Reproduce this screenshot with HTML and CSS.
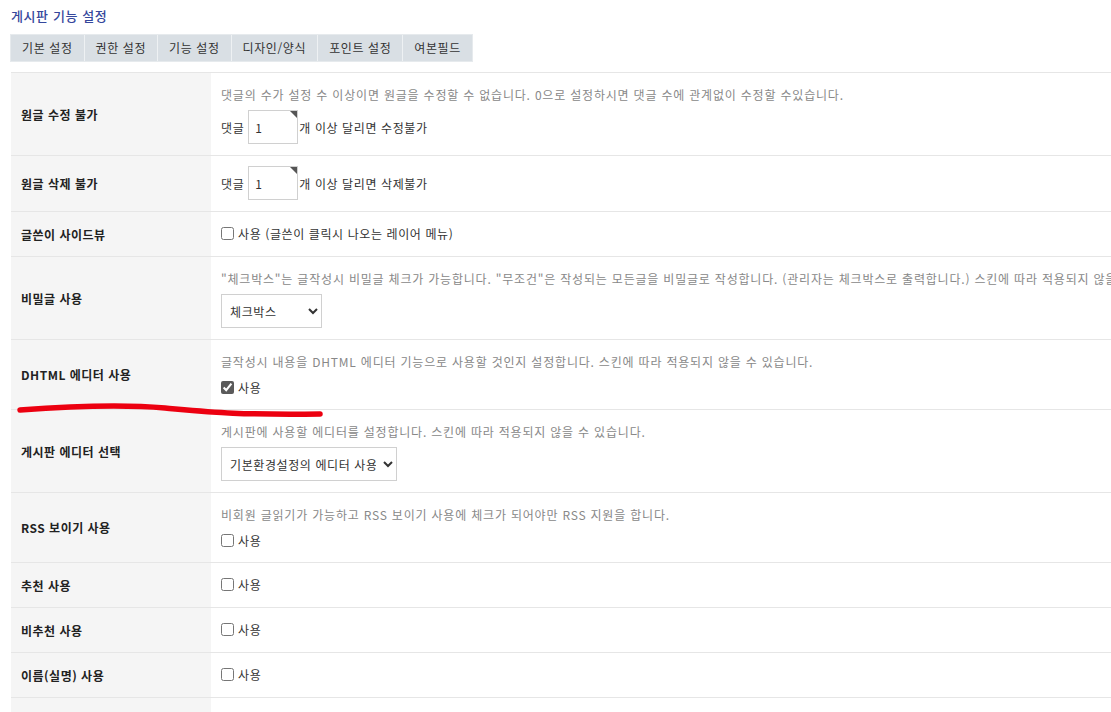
FILE: index.html
```html
<!DOCTYPE html>
<html lang="ko">
<head>
    <meta charset="UTF-8">
    <meta name="viewport" content="width=device-width, initial-scale=1.0">
    <title>게시판 기능 설정</title>
    <link rel="stylesheet" href="styles.css">
</head>
<body>
    <div class="page">
        <h2 class="title">게시판 기능 설정</h2>
        <ul class="tabs">
            <li>기본 설정</li>
            <li>권한 설정</li>
            <li>기능 설정</li>
            <li>디자인/양식</li>
            <li>포인트 설정</li>
            <li>여본필드</li>
        </ul>

        <table class="setting-table">
            <tbody>
                <tr>
                    <th>원글 수정 불가</th>
                    <td>
                        <div class="desc">댓글의 수가 설정 수 이상이면 원글을 수정할 수 없습니다. 0으로 설정하시면 댓글 수에 관계없이 수정할 수있습니다.</div>
                        <div class="field">댓글 <span class="num-wrap"><input type="text" class="num" value="1"></span>개 이상 달리면 수정불가</div>
                    </td>
                </tr>
                <tr>
                    <th>원글 삭제 불가</th>
                    <td>
                        <div class="field">댓글 <span class="num-wrap"><input type="text" class="num" value="1"></span>개 이상 달리면 삭제불가</div>
                    </td>
                </tr>
                <tr>
                    <th>글쓴이 사이드뷰</th>
                    <td>
                        <label class="check"><input type="checkbox"> 사용 (글쓴이 클릭시 나오는 레이어 메뉴)</label>
                    </td>
                </tr>
                <tr>
                    <th>비밀글 사용</th>
                    <td>
                        <div class="desc">"체크박스"는 글작성시 비밀글 체크가 가능합니다. "무조건"은 작성되는 모든글을 비밀글로 작성합니다. (관리자는 체크박스로 출력합니다.) 스킨에 따라 적용되지 않을 수 있습니다.</div>
                        <div class="field">
                            <select class="sel sel-short">
                                <option>체크박스</option>
                                <option>무조건</option>
                                <option>사용하지 않음</option>
                            </select>
                        </div>
                    </td>
                </tr>
                <tr>
                    <th>DHTML 에디터 사용</th>
                    <td>
                        <div class="desc">글작성시 내용을 DHTML 에디터 기능으로 사용할 것인지 설정합니다. 스킨에 따라 적용되지 않을 수 있습니다.</div>
                        <label class="check"><input type="checkbox" checked> 사용</label>
                    </td>
                </tr>
                <tr>
                    <th>게시판 에디터 선택</th>
                    <td>
                        <div class="desc">게시판에 사용할 에디터를 설정합니다. 스킨에 따라 적용되지 않을 수 있습니다.</div>
                        <div class="field">
                            <select class="sel sel-long">
                                <option>기본환경설정의 에디터 사용</option>
                                <option>smarteditor2</option>
                                <option>cheditor5</option>
                            </select>
                        </div>
                    </td>
                </tr>
                <tr>
                    <th>RSS 보이기 사용</th>
                    <td>
                        <div class="desc">비회원 글읽기가 가능하고 RSS 보이기 사용에 체크가 되어야만 RSS 지원을 합니다.</div>
                        <label class="check"><input type="checkbox"> 사용</label>
                    </td>
                </tr>
                <tr>
                    <th>추천 사용</th>
                    <td><label class="check"><input type="checkbox"> 사용</label></td>
                </tr>
                <tr>
                    <th>비추천 사용</th>
                    <td><label class="check"><input type="checkbox"> 사용</label></td>
                </tr>
                <tr>
                    <th>이름(실명) 사용</th>
                    <td><label class="check"><input type="checkbox"> 사용</label></td>
                </tr>
                <tr class="row-empty">
                    <th></th>
                    <td></td>
                </tr>
            </tbody>
        </table>

        <svg class="marker" width="340" height="30" viewBox="0 0 340 30">
            <path d="M20 14 C 60 11, 120 8, 165 12 S 235 19, 320 18" fill="none" stroke="#ec0010" stroke-width="5.5" stroke-linecap="round"/>
        </svg>
    </div>
</body>
</html>
```

FILE: styles.css
```css
body {
    margin: 0;
    font-family: "Noto Sans CJK KR", "Noto Sans", sans-serif;
    font-size: 12px;
    letter-spacing: 0.6px;
    color: #333;
    background-color: #fff;
    overflow: hidden;
}
.page {
    position: relative;
    padding: 6px 0 0 10px;
    width: 1400px;
}
.title {
    margin: 0 0 8px 1px;
    font-size: 13px;
    font-weight: 500;
    line-height: 20px;
    color: #35479c;
}
.tabs {
    display: flex;
    margin: 0;
    padding: 0;
    list-style: none;
    width: fit-content;
    background-color: #d9dfe4;
    border: 1px solid #e6eaed;
}
.tabs li {
    padding: 0 11px;
    line-height: 26px;
    color: #333;
    border-right: 1px solid #eef1f3;
}
.tabs li:last-child {
    border-right: none;
}
.setting-table {
    margin: 10px 0 0 1px;
    width: 1300px;
    border-collapse: collapse;
    border-top: 1px solid #e6e6e6;
}
.setting-table tr {
    border-bottom: 1px solid #e6e6e6;
}
.setting-table th {
    width: 180px;
    padding: 0 10px;
    text-align: left;
    font-weight: bold;
    letter-spacing: 0.5px;
    color: #222;
    background-color: #f5f5f5;
    vertical-align: middle;
}
.setting-table td {
    padding: 10px 10px 11px;
    vertical-align: top;
}
.row-empty th,
.row-empty td {
    height: 23px;
}
.desc {
    line-height: 24px;
    margin-bottom: 3px;
    letter-spacing: 0.8px;
    color: #888;
    white-space: nowrap;
}
.field {
    display: flex;
    align-items: center;
    height: 34px;
    white-space: nowrap;
}
.num-wrap {
    position: relative;
    display: inline-block;
    margin: 0 1px 0 4px;
}
.num-wrap::after {
    content: "";
    position: absolute;
    top: 1px;
    right: 1px;
    border-top: 7px solid #555;
    border-left: 7px solid transparent;
}
.num {
    box-sizing: border-box;
    width: 50px;
    height: 34px;
    padding: 0 6px;
    border: 1px solid #d0d0d0;
    font-family: inherit;
    font-size: 12px;
    color: #333;
    outline: none;
}
.sel {
    box-sizing: border-box;
    height: 34px;
    padding: 0 4px;
    border: 1px solid #d0d0d0;
    border-radius: 0;
    background-color: #fff;
    font-family: inherit;
    font-size: 12px;
    letter-spacing: 0.6px;
    color: #333;
}
.sel-short {
    width: 101px;
}
.sel-long {
    width: 176px;
}
.check {
    display: flex;
    align-items: center;
    height: 23px;
    color: #333;
    white-space: nowrap;
}
.desc + .check {
    height: 21px;
}
.check input {
    width: 13px;
    height: 13px;
    margin: 0 4px 0 0;
    accent-color: #5a5a5a;
}
.marker {
    position: absolute;
    left: 0;
    top: 396px;
}
```
